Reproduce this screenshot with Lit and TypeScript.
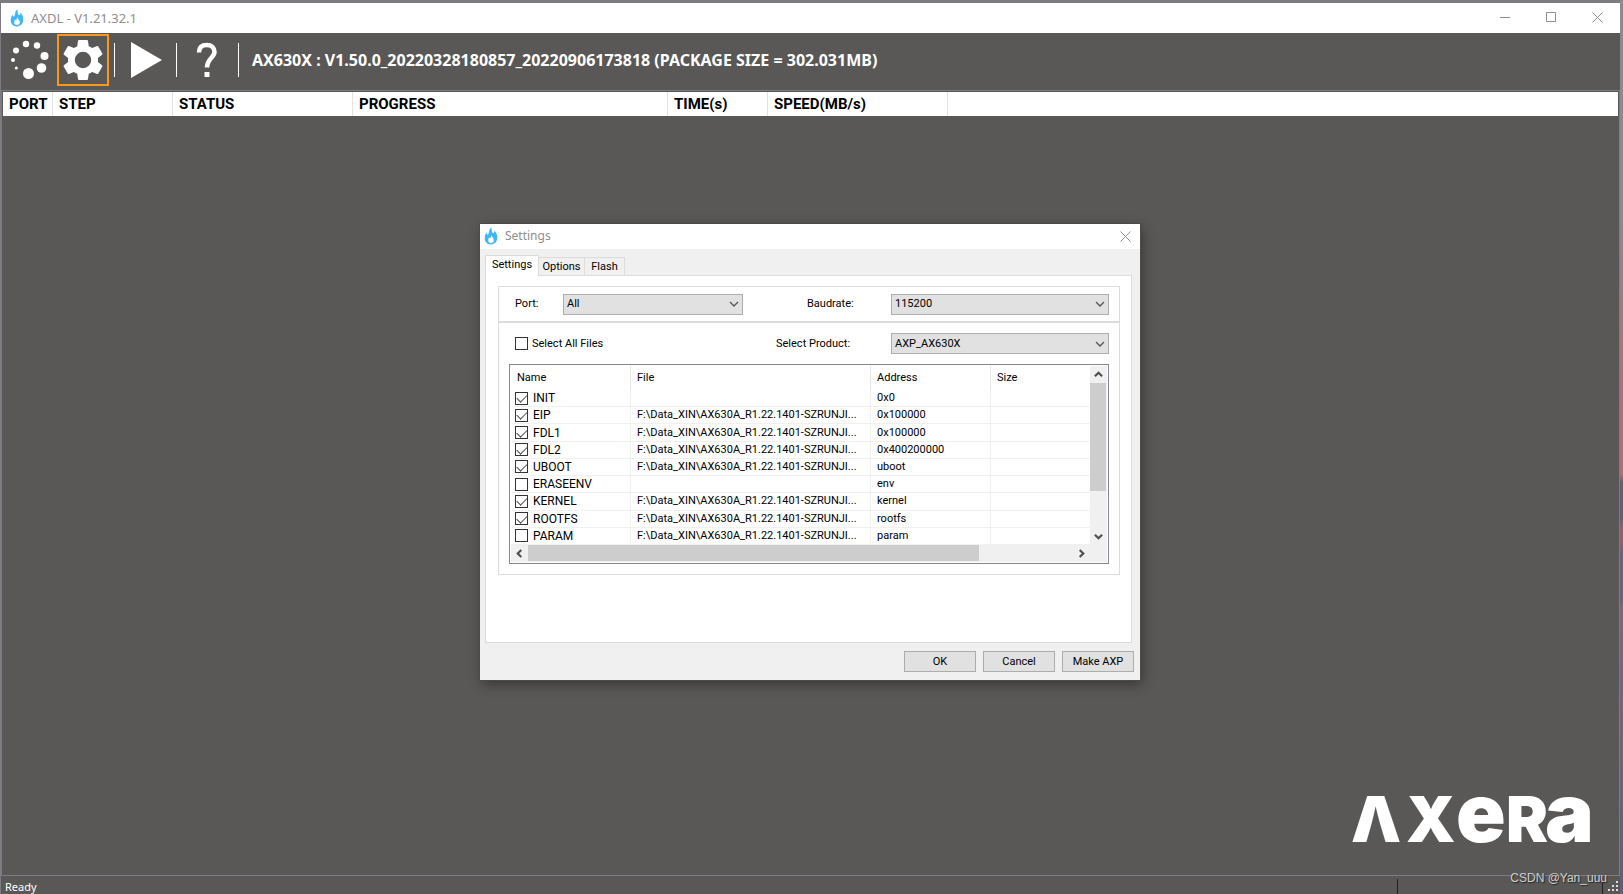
import { LitElement, html, css, svg } from "lit";
import { customElement, state } from "lit/decorators.js";

interface Part { name: string; file: string; address: string; on: boolean; }
const PATH = "F:\\Data_XIN\\AX630A_R1.22.1401-SZRUNJI...";

const flame = html`<svg class="flame" viewBox="0 0 14 18" aria-hidden="true">
  <path fill="#3fb6f5" d="M7.2.5C8 2.500 7.400 4 8.400 5.600 9 6.500 10 6.300 10.200 5.300 10.600 4.500 10.400 4 10.300 3.500 12.300 5.200 13.300 8 13.300 10.600 13.300 14.800 10.700 17.400 7 17.400 3.300 17.400.7 14.900.7 11.200.7 8.800 1.500 7 2.700 5.400 2.700 6.600 2.900 7.500 3.700 7.500 5.600 7.500 3.900 3.200 7.200.5Z"/>
  <path fill="#fff" d="M7.400 8.200C7.600 9.800 9.800 10.900 9.800 13.200A2.800 2.700 0 0 1 4.200 13.200C4.200 11.900 4.700 11.200 5.300 10.600 5.500 11.300 6.100 11.500 6.400 11 6.900 10.200 6.600 9.200 7.400 8.200Z"/>
</svg>`;
const chevron = (d: string) => html`<svg class="chev" viewBox="0 0 10 10" aria-hidden="true"><path d=${d} fill="none" stroke="#505050" stroke-width="2.400"/></svg>`;
const cross = html`<svg class="sys" viewBox="0 0 11 11" aria-hidden="true"><path d="M.5.5l10 10M10.500.5l-10 10" stroke="#8e8e8e" fill="none"/></svg>`;

@customElement("app-root")
export class AppRoot extends LitElement {
  @state() private tab = "Settings";
  @state() private parts: Part[] = [
    { name: "INIT", file: "", address: "0x0", on: true },
    { name: "EIP", file: PATH, address: "0x100000", on: true },
    { name: "FDL1", file: PATH, address: "0x100000", on: true },
    { name: "FDL2", file: PATH, address: "0x400200000", on: true },
    { name: "UBOOT", file: PATH, address: "uboot", on: true },
    { name: "ERASEENV", file: "", address: "env", on: false },
    { name: "KERNEL", file: PATH, address: "kernel", on: true },
    { name: "ROOTFS", file: PATH, address: "rootfs", on: true },
    { name: "PARAM", file: PATH, address: "param", on: false },
  ];

  static styles = css`
    :host { display: block; padding-right: 3px; font: 11px/16px Roboto, "Liberation Sans", sans-serif; color: #000;
      background: linear-gradient(#8b8991 25%, #a87176 45%, #a87176 53%, #5d6176 54%, #5d6176 58%, #8a6072 59%, #8a6072 61%, #60647c 62%, #60647c 67%, #7a687e 68%, #5c6078); }
    * { box-sizing: border-box; }
    button, input, select { font: inherit; color: inherit; margin: 0; }
    button { border: 0; padding: 0; background: none; display: flex; align-items: center; justify-content: center; }
    .desktop { position: relative; min-height: 100vh; display: flex; flex-direction: column; background: #595856; border: solid #7d7c83; border-width: 3px 0 0 1px; }
    .titlebar { display: flex; align-items: center; gap: 7px; height: 30px; background: #fff; padding: 0 0 1px 9px; color: #8e8e8e; font: 13px/20px "Noto Sans", sans-serif; }
    .titlebar h1, .titlebar h2 { font: inherit; margin: 0; flex: 1; }
    .flame { width: 14px; height: 18px; }
    .sys { width: 11px; height: 11px; }
    .winbtns { display: flex; align-self: stretch; }
    .winbtn { width: 46px; height: 100%; }
    .toolbar { display: flex; align-items: center; height: 57px; padding: 0 0 3px 3px; color: #fff; }
    .tool { width: 52px; height: 52px; }
    .tool svg { width: 44px; height: 44px; flex: none; }
    .tool.active { margin: 0 5px 0 1px; border: 2px solid #f79a1c; }
    .tool.active svg { width: 48px; height: 48px; }
    .tool.wide { width: 61px; }
    .rule { width: 1px; height: 34px; background: #fff; }
    .package { margin: 0 0 0 13px; font: bold 16px/20px "Noto Sans", sans-serif; }
    .workspace { flex: 1; display: flex; flex-direction: column; border: 1px solid #7d7c86; padding: 1px 1px 0; }
    .tasks { width: 100%; table-layout: fixed; border-collapse: separate; border-spacing: 0; background: #fff; font-size: 15px; }
    .tasks th { height: 24px; padding: 0 6px; border-right: 1px solid #e3e3e3; text-align: left; font-weight: 700; white-space: nowrap; }
    .tasks th:last-child { border: 0; }
    .brand { margin: auto 28px 0 auto; }
    .brand svg { display: block; width: 240px; height: 110px; overflow: visible; font-family: Inter, sans-serif; font-weight: 900; }
    .status { display: flex; align-items: center; height: 18px; color: #fff; padding: 3px 0 0 4px; font: 11px/15px "Noto Sans", sans-serif; }
    .status span { flex: 1; }
    .pane { width: 206px; height: 15px; border: solid #222; border-width: 0 1px; }
    .grip { width: 17px; height: 14px; }
    .watermark { position: absolute; right: 13px; bottom: 8px; margin: 0; color: #d0d0d0; font: 12px/16px "Liberation Sans", sans-serif; text-shadow: 1px 1px 1px #222; }
    .overlay { position: absolute; inset: 0; display: grid; place-content: center; padding: 7px 1px 0 0; }
    .dialog { width: 660px; background: #f0f0f0; box-shadow: 0 0 0 1px #4b4b4a, 2px 4px 12px rgba(0,0,0,.4); padding-bottom: 8px; }
    .dialog .titlebar { height: 25px; padding-left: 4px; font-size: 12px; }
    .dialog .winbtn { width: 30px; }
    .tabs { display: flex; align-items: flex-end; height: 26px; padding-left: 5px; }
    .tab { height: 18px; width: 40px; border: 1px solid #dcdcdc; border-left: 0; border-bottom: 0; }
    .tab.mid { width: 46px; }
    .tab.on { height: 21px; width: 54px; border-left: 1px solid #dcdcdc; background: #fff; padding-bottom: 2px; position: relative; z-index: 1; margin-bottom: -1px; }
    .sheet { margin: 0 8px 8px 5px; height: 368px; background: #fff; border: 1px solid #dcdcdc; padding: 10px 11px 10px 12px; }
    .group { border: 1px solid #dcdcdc; padding: 6px 10px; }
    .group + .group { padding: 10px; }
    .line { display: grid; grid-template-columns: 48px 180px 64px 1fr 218px; align-items: center; padding-left: 6px; height: 22px; }
    .line.product { grid-template-columns: 261px 1fr 218px; height: 21px; margin-bottom: 10px; }
    .pickbox { position: relative; display: grid; align-items: center; }
    .pickbox select { appearance: none; width: 100%; height: 21px; border: 1px solid #adadad; background: #e1e1e1; border-radius: 0; padding: 0 3px; }
    .pickbox svg { position: absolute; right: 4px; width: 10px; height: 10px; pointer-events: none; }
    .tick { display: flex; align-items: center; gap: 4px; }
    .tick input { appearance: none; flex: none; width: 13px; height: 13px; border: 1px solid #333; background: #fff; display: grid; place-items: center; }
    .tick input:checked::after { content: ""; width: 9px; height: 5px; border: solid #505050; border-width: 0 0 1px 1px; transform: translateY(-1px) rotate(-45deg); }
    .list { border: 1px solid #828790; padding: 1px; display: grid; grid-template-columns: 1fr 17px; grid-template-rows: 179px 17px; }
    .files { width: 100%; table-layout: fixed; border-collapse: separate; border-spacing: 0; }
    .files th { height: 24px; font-weight: 400; text-align: left; padding: 0 6px; border-right: 1px solid #e5e5e5; }
    .files td { height: 17px; padding: 0 6px; border: solid #f0f0f0; border-width: 0 1px 1px 0; white-space: nowrap; line-height: 16px; }
    .files td:first-child { padding: 0 4px; font-size: 12px; }
    .files th:last-child, .files td:last-child { border-right: 0; }
    .files .tick { gap: 5px; }
    .bar { background: #f0f0f0; display: flex; }
    .bar.v { flex-direction: column; padding: 0 1px 0 0; }
    .bar.h { padding-bottom: 1px; }
    .bar button { flex: none; width: 17px; height: 17px; }
    .bar .chev { width: 9px; height: 9px; }
    .thumb { background: #cdcdcd; }
    .v .thumb { height: 108px; margin-bottom: auto; }
    .h .thumb { width: 451px; margin-right: auto; }
    .actions { display: flex; justify-content: flex-end; gap: 7px; padding-right: 6px; }
    .actions button { width: 72px; height: 21px; border: 1px solid #adadad; background: #e1e1e1; }
  `;

  private toggle(i: number) {
    this.parts = this.parts.map((p, n) => (n === i ? { ...p, on: !p.on } : p));
  }
  private toggleAll(e: Event) {
    const on = (e.target as HTMLInputElement).checked;
    this.parts = this.parts.map((p) => ({ ...p, on }));
  }
  private pick(id: string, value: string) {
    return html`<div class="pickbox"><select id=${id}><option>${value}</option></select>
      <svg viewBox="0 0 10 10" aria-hidden="true"><path d="M1 3l4 4 4-4" fill="none" stroke="#555" stroke-width="1.300"/></svg></div>`;
  }

  render() {
    const dots = [[26, 44, 3.200], [37, 45.500, 3.200], [44.500, 56, 4], [41.500, 68, 4.800], [28.500, 73.500, 5.500], [16, 50.500, 3], [13, 60, 2], [16.300, 68, 1.500]];
    return html`<div class="desktop">
      <header class="titlebar">${flame}<h1>AXDL - V1.21.32.1</h1>
        <div class="winbtns">
          <button class="winbtn" aria-label="Minimize"><svg class="sys" viewBox="0 0 11 11"><path d="M0 5.500h10" stroke="#8e8e8e"/></svg></button>
          <button class="winbtn" aria-label="Maximize"><svg class="sys" viewBox="0 0 11 11"><path d="M.5.5h9v9h-9z" fill="none" stroke="#8e8e8e"/></svg></button>
          <button class="winbtn" aria-label="Close">${cross}</button>
        </div>
      </header>
      <nav class="toolbar">
        <button class="tool" aria-label="Load"><svg viewBox="8 38 44 44" fill="#fff">${dots.map((d) => svg`<circle cx=${d[0]} cy=${d[1]} r=${d[2]}/>`)}</svg></button>
        <button class="tool active" aria-label="Settings"><svg viewBox="0 0 24 24" fill="#fff"><path d="M19.430 12.980c.04-.32.07-.64.07-.98s-.03-.66-.07-.98l2.110-1.650c.19-.15.24-.42.12-.64l-2-3.460c-.12-.22-.39-.3-.61-.22l-2.490 1c-.52-.4-1.080-.73-1.690-.98l-.38-2.650C14.460 2.180 14.250 2 14 2h-4c-.25 0-.46.18-.49.42l-.38 2.650c-.61.25-1.170.59-1.690.98l-2.490-1c-.23-.09-.49 0-.61.22l-2 3.460c-.13.22-.07.49.12.64l2.110 1.650c-.04.32-.07.65-.07.98s.03.66.07.98l-2.110 1.650c-.19.15-.24.42-.12.64l2 3.460c.12.22.39.3.61.22l2.490-1c.52.4 1.080.73 1.690.98l.38 2.650c.03.24.24.42.49.42h4c.25 0 .46-.18.49-.42l.38-2.650c.61-.25 1.170-.59 1.690-.98l2.490 1c.23.09.49 0 .61-.22l2-3.460c.12-.22.07-.49-.12-.64l-2.110-1.650zM12 16.100A4.100 4.100 0 1 1 12 7.900a4.100 4.100 0 0 1 0 8.200z"/></svg></button>
        <i class="rule"></i>
        <button class="tool wide" aria-label="Start"><svg viewBox="0 0 44 44"><path d="M7 4l31 18L7 40z" fill="#fff"/></svg></button>
        <i class="rule"></i>
        <button class="tool wide" aria-label="Help"><svg viewBox="0 0 44 44"><path d="M13 14.500c0-5 3-7.500 7.800-7.500s7.700 2.700 7.700 7c0 5.500-7.500 6.500-7.500 15.500" fill="none" stroke="#fff" stroke-width="4.500"/><path d="M18.500 34h5v5h-5z" fill="#fff"/></svg></button>
        <i class="rule"></i>
        <p class="package">AX630X : V1.50.0_20220328180857_20220906173818 (PACKAGE SIZE = 302.031MB)</p>
      </nav>
      <main class="workspace">
        <table class="tasks">
          <colgroup><col width="50"><col width="120"><col width="180"><col width="315"><col width="100"><col width="180"><col></colgroup>
          <thead><tr><th>PORT</th><th>STEP</th><th>STATUS</th><th>PROGRESS</th><th>TIME(s)</th><th>SPEED(MB/s)</th><th></th></tr></thead>
        </table>
        <div class="brand"><svg viewBox="0 0 240 110" fill="#fff" role="img" aria-label="AXERA">
          <text y="77" font-size="63"><tspan x="1">Λ</tspan><tspan x="56">X</tspan><tspan x="106" font-size="82">e</tspan><tspan x="156" font-size="63">R</tspan><tspan x="195" font-size="82">a</tspan></text>
        </svg></div>
      </main>
      <footer class="status"><span>Ready</span><div class="pane"></div>
        <svg class="grip" viewBox="0 0 17 14" fill="#ddd"><path d="M13 1h2v2h-2zM9 5h2v2H9zM13 5h2v2h-2zM5 9h2v2H5zM9 9h2v2H9zM13 9h2v2h-2z"/></svg>
      </footer>
      <p class="watermark">CSDN @Yan_uuu</p>
      <div class="overlay"><section class="dialog" role="dialog" aria-label="Settings">
        <div class="titlebar">${flame}<h2>Settings</h2><button class="winbtn" aria-label="Close">${cross}</button></div>
        <div class="tabs" role="tablist">${["Settings", "Options", "Flash"].map((t) => html`<button role="tab" class="tab ${t === this.tab ? "on" : t === "Options" ? "mid" : ""}" @click=${() => (this.tab = t)}>${t}</button>`)}</div>
        <div class="sheet">
          <div class="group"><div class="line"><label for="port">Port:</label>${this.pick("port", "All")}<span></span><label for="baud">Baudrate:</label>${this.pick("baud", "115200")}</div></div>
          <div class="group">
            <div class="line product"><label class="tick"><input type="checkbox" @change=${this.toggleAll}>Select All Files</label><label for="product">Select Product:</label>${this.pick("product", "AXP_AX630X")}</div>
            <div class="list">
              <table class="files">
                <colgroup><col width="120"><col width="240"><col width="120"><col></colgroup>
                <thead><tr><th>Name</th><th>File</th><th>Address</th><th>Size</th></tr></thead>
                <tbody>${this.parts.map((p, i) => html`<tr>
                  <td><label class="tick"><input type="checkbox" .checked=${p.on} @change=${() => this.toggle(i)}>${p.name}</label></td>
                  <td>${p.file}</td><td>${p.address}</td><td></td></tr>`)}</tbody>
              </table>
              <div class="bar v"><button aria-label="Up">${chevron("M1 7l4-4 4 4")}</button><div class="thumb"></div><button aria-label="Down">${chevron("M1 3l4 4 4-4")}</button></div>
              <div class="bar h"><button aria-label="Left">${chevron("M7 1L3 5l4 4")}</button><div class="thumb"></div><button aria-label="Right">${chevron("M3 1l4 4-4 4")}</button></div>
              <div class="bar"></div>
            </div>
          </div>
        </div>
        <div class="actions"><button>OK</button><button>Cancel</button><button>Make AXP</button></div>
      </section></div>
    </div>`;
  }
}
